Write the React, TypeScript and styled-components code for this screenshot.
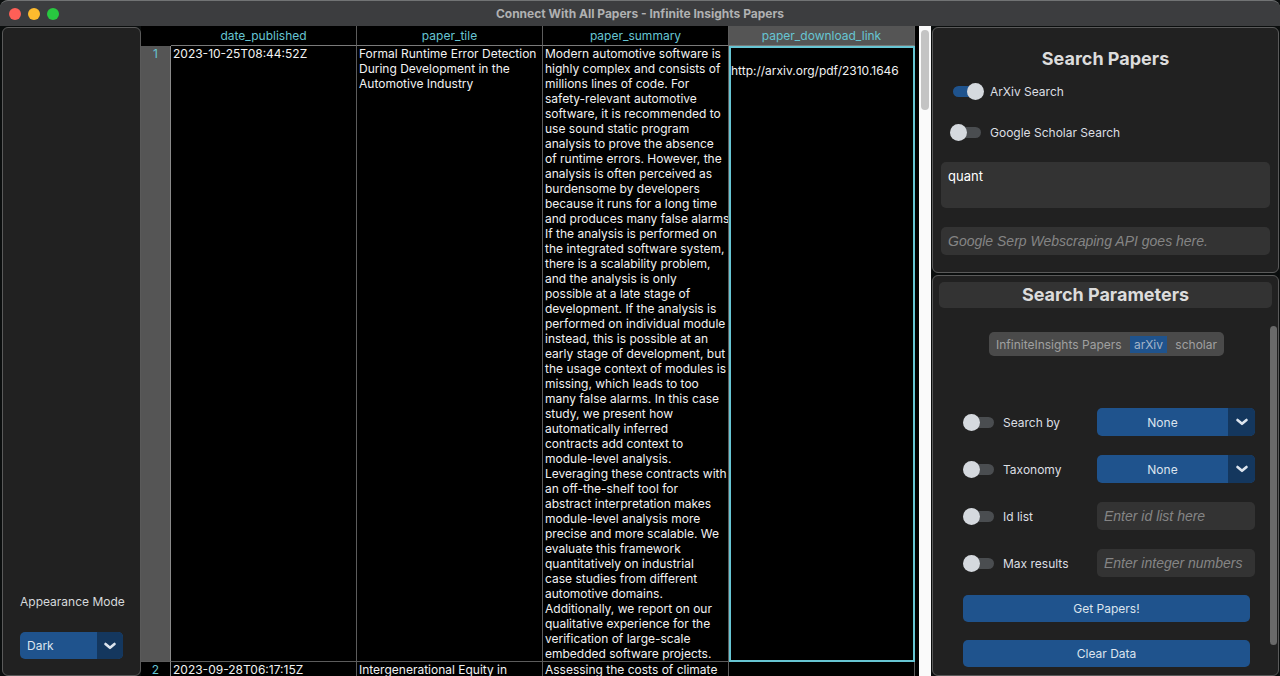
import React from "react";
import styled, { createGlobalStyle, css } from "styled-components";

const GlobalStyle = createGlobalStyle`
  *, *::before, *::after { box-sizing: border-box; }
  body {
    margin: 0;
    background: #0b0e0e;
    color: #dce4ee;
    font-family: Inter, "Liberation Sans", sans-serif;
    font-size: 12px;
  }
  button, input, select, textarea { font: inherit; color: inherit; }
`;

const Window = styled.div`
  display: flex;
  flex-direction: column;
  height: 100vh;
  overflow: hidden;
`;

const TitleBar = styled.header`
  display: grid;
  grid-template-columns: 1fr auto 1fr;
  align-items: center;
  height: 26px;
  flex: none;
  padding: 0 9px;
  background: #3c3d3f;
  border-top: 1px solid #717374;
  border-radius: 8px 8px 0 0;
`;

const Lights = styled.div`
  display: flex;
  gap: 7px;
`;

const Light = styled.button<{ $color: string }>`
  width: 12px;
  height: 12px;
  padding: 0;
  border: 0;
  border-radius: 50%;
  background: ${(p) => p.$color};
`;

const WindowTitle = styled.h1`
  margin: 0;
  font-size: 12px;
  font-weight: 700;
  line-height: 16px;
  color: #b0b1b2;
`;

const Body = styled.div`
  display: flex;
  flex: 1;
  min-height: 0;
  padding-left: 2px;
`;

const panel = css`
  background: #212121;
  border: 1px solid #5a5a5a;
  border-radius: 6px;
`;

const Sidebar = styled.aside`
  ${panel}
  display: flex;
  flex-direction: column;
  justify-content: flex-end;
  gap: 20px;
  flex: none;
  width: 139px;
  margin-top: 1px;
  padding: 16px 17px;
`;

const SidebarLabel = styled.label`
  line-height: 20px;
  text-align: center;
  white-space: nowrap;
  color: #d6d9dc;
`;

const TableArea = styled.main`
  flex: 1;
  min-width: 0;
  overflow: hidden;
  background: #000;
  padding-right: 4px;
`;

const PaperTable = styled.table`
  width: 100%;
  table-layout: fixed;
  border-collapse: separate;
  border-spacing: 0;
  color: #f2f2f2;
  line-height: 15px;
`;

const IndexCol = styled.col`
  width: 30px;
`;

const ColumnHead = styled.th<{ $selected?: boolean }>`
  height: 20px;
  padding: 0;
  font-weight: 400;
  color: #67c5d3;
  background: ${(p) => (p.$selected ? "#555" : "#000")};
  border-right: 1px solid #5c5c5c;
  border-bottom: 1px solid #7a7a7a;
`;

const Corner = styled.td`
  background: #000;
`;

const RowHead = styled.th<{ $selected?: boolean }>`
  padding: 0;
  vertical-align: top;
  font-weight: 400;
  color: #67c5d3;
  background: ${(p) => (p.$selected ? "#555" : "#000")};
  border-right: 1px solid #8a8a8a;
  border-bottom: 1px solid #5c5c5c;
`;

const Cell = styled.td<{ $selected?: boolean }>`
  padding: 0 0 0 2px;
  vertical-align: top;
  white-space: pre;
  overflow: hidden;
  border-right: 1px solid #5c5c5c;
  border-bottom: 1px solid #5c5c5c;
  ${(p) =>
    p.$selected &&
    css`
      padding: 0;
      border: 2px solid #67c5d3;
    `}
`;

const PaperLink = styled.a`
  color: inherit;
  text-decoration: none;
`;

const TableScrollbar = styled.div`
  flex: none;
  width: 12px;
  padding: 4px 2px;
  background: #fafafa;
`;

const TableThumb = styled.div`
  height: 80px;
  border-radius: 4px;
  background: #c4c4c4;
`;

const Right = styled.aside`
  display: flex;
  flex-direction: column;
  gap: 2px;
  flex: none;
  width: 349px;
  padding: 1px 1px 0 1px;
`;

const SearchPanel = styled.section`
  ${panel}
  display: flex;
  flex-direction: column;
  height: 246px;
  flex: none;
  padding: 18px 8px 0;
`;

const PanelTitle = styled.h2`
  margin: 0;
  font-size: 18px;
  font-weight: 700;
  line-height: 26px;
  text-align: center;
  color: #dcdcdc;
`;

const Engines = styled.div`
  display: flex;
  flex-direction: column;
  gap: 21px;
  padding: 9px 0 20px 9px;
`;

const SwitchLabel = styled.label`
  display: flex;
  align-items: center;
  gap: 6px;
  height: 20px;
  white-space: nowrap;
  color: #dcdfe3;
`;

const Switch = styled.input.attrs({ type: "checkbox" })`
  appearance: none;
  display: grid;
  align-items: center;
  width: 34px;
  height: 17px;
  margin: 0;

  &::before,
  &::after {
    content: "";
    grid-area: 1 / 1;
  }
  &::before {
    height: 11px;
    margin: 0 3px;
    border-radius: 6px;
    background: #4a4d50;
  }
  &::after {
    width: 17px;
    height: 17px;
    border-radius: 50%;
    background: #d5d9de;
  }
  &:checked::before {
    background: #1f538d;
  }
  &:checked::after {
    justify-self: end;
  }
`;

const QueryBox = styled.textarea`
  display: block;
  width: 100%;
  height: 46px;
  margin-bottom: 19px;
  padding: 6px 7px;
  border: 0;
  border-radius: 5px;
  resize: none;
  outline: 0;
  background: #333;
  color: #fff;
  font-size: 13px;
  line-height: 17px;
`;

const TextField = styled.input`
  width: 100%;
  height: 28px;
  padding: 0 7px;
  border: 0;
  border-radius: 5px;
  background: #333;

  &::placeholder {
    color: #858585;
    opacity: 1;
    font-family: "Liberation Sans", sans-serif;
    font-size: 14px;
    font-style: italic;
  }
`;

const ParamsPanel = styled.section`
  ${panel}
  display: flex;
  flex-direction: column;
  flex: 1;
  min-height: 0;
  padding: 6px 1px 0;
`;

const ParamsTitle = styled(PanelTitle)`
  margin: 0 5px;
  border-radius: 5px;
  background: #333;
`;

const ParamsScroll = styled.div`
  display: flex;
  flex: 1;
  min-height: 0;
  padding-top: 18px;
`;

const ParamsForm = styled.form`
  flex: 1;
  min-width: 0;
  padding: 6px 20px 0 29px;
`;

const ParamsThumb = styled.div`
  flex: none;
  width: 7px;
  height: 319px;
  border-radius: 4px;
  background: #6a6a6a;
`;

const Segments = styled.div`
  display: flex;
  justify-content: space-between;
  align-items: center;
  width: 235px;
  height: 24px;
  margin: 0 auto 52px;
  padding: 0 3px;
  border-radius: 5px;
  background: #4a4a4a;
`;

const Segment = styled.button<{ $active?: boolean }>`
  height: 17px;
  padding: 0 4px;
  border: 0;
  line-height: 17px;
  white-space: nowrap;
  color: ${(p) => (p.$active ? "#a3b4c8" : "#a0a0a0")};
  background: ${(p) => (p.$active ? "#1f538d" : "transparent")};
`;

const Fields = styled.div`
  display: grid;
  grid-template-columns: 1fr 158px;
  align-items: center;
  row-gap: 19px;
  margin-right: -5px;
`;

const SelectBox = styled.div<{ $arrow: number }>`
  display: grid;
  grid-template-columns: 1fr ${(p) => p.$arrow}px;
  align-items: center;
  height: ${(p) => p.$arrow + 1}px;
  overflow: hidden;
  border-radius: 5px;
  background: #1f538d;
`;

const Select = styled.select<{ $centered?: boolean }>`
  appearance: none;
  grid-area: 1 / 1;
  width: 100%;
  height: 100%;
  padding: 0 7px;
  border: 0;
  background: transparent;
  text-align-last: ${(p) => (p.$centered ? "center" : "left")};
`;

const Arrow = styled.span`
  display: grid;
  place-items: center;
  align-self: stretch;
  background: #14375e;
`;

const Action = styled.button`
  display: block;
  width: 100%;
  height: 27px;
  margin-top: 18px;
  border: 0;
  border-radius: 5px;
  background: #1f538d;
`;

const Chevron = () => (
  <svg width="14" height="10" viewBox="0 0 14 10" aria-hidden="true">
    <path
      d="M2.5 3 L7 6.8 L11.5 3"
      fill="none"
      stroke="#dce4ee"
      strokeWidth="2.6"
      strokeLinecap="round"
      strokeLinejoin="round"
    />
  </svg>
);

const columns = ["date_published", "paper_tile", "paper_summary", "paper_download_link"];

const papers = [
  {
    date: "2023-10-25T08:44:52Z",
    title: "Formal Runtime Error Detection\nDuring Development in the\nAutomotive Industry",
    link: "http://arxiv.org/pdf/2310.1646",
    summary: `Modern automotive software is
highly complex and consists of
millions lines of code. For
safety-relevant automotive
software, it is recommended to
use sound static program
analysis to prove the absence
of runtime errors. However, the
analysis is often perceived as
burdensome by developers
because it runs for a long time
and produces many false alarms
If the analysis is performed on
the integrated software system,
there is a scalability problem,
and the analysis is only
possible at a late stage of
development. If the analysis is
performed on individual module
instead, this is possible at an
early stage of development, but
the usage context of modules is
missing, which leads to too
many false alarms. In this case
study, we present how
automatically inferred
contracts add context to
module-level analysis.
Leveraging these contracts with
an off-the-shelf tool for
abstract interpretation makes
module-level analysis more
precise and more scalable. We
evaluate this framework
quantitatively on industrial
case studies from different
automotive domains.
Additionally, we report on our
qualitative experience for the
verification of large-scale
embedded software projects.`,
  },
  {
    date: "2023-09-28T06:17:15Z",
    title: "Intergenerational Equity in",
    link: "",
    summary: "Assessing the costs of climate",
  },
];

const engines = [
  { name: "ArXiv Search", on: true },
  { name: "Google Scholar Search", on: false },
];

const params = [
  { name: "Search by", options: ["None"] },
  { name: "Taxonomy", options: ["None"] },
  { name: "Id list", placeholder: "Enter id list here" },
  { name: "Max results", placeholder: "Enter integer numbers" },
];

export default function App() {
  return (
    <Window>
      <GlobalStyle />
      <TitleBar>
        <Lights>
          <Light type="button" $color="#fe5f57" aria-label="Close" />
          <Light type="button" $color="#febb2e" aria-label="Minimize" />
          <Light type="button" $color="#28c840" aria-label="Zoom" />
        </Lights>
        <WindowTitle>Connect With All Papers - Infinite Insights Papers</WindowTitle>
      </TitleBar>
      <Body>
        <Sidebar>
          <SidebarLabel htmlFor="appearance">Appearance Mode</SidebarLabel>
          <SelectBox $arrow={26}>
            <Select id="appearance" defaultValue="Dark">
              <option>Dark</option>
            </Select>
            <Arrow>
              <Chevron />
            </Arrow>
          </SelectBox>
        </Sidebar>
        <TableArea>
          <PaperTable>
            <colgroup>
              <IndexCol />
              {columns.map((c) => (
                <col key={c} />
              ))}
            </colgroup>
            <thead>
              <tr>
                <Corner />
                {columns.map((c, i) => (
                  <ColumnHead key={c} scope="col" $selected={i === 3}>
                    {c}
                  </ColumnHead>
                ))}
              </tr>
            </thead>
            <tbody>
              {papers.map((p, i) => (
                <tr key={p.date}>
                  <RowHead scope="row" $selected={i === 0}>
                    {i + 1}
                  </RowHead>
                  <Cell>{p.date}</Cell>
                  <Cell>{p.title}</Cell>
                  <Cell>{p.summary}</Cell>
                  <Cell $selected={i === 0}>
                    {p.link && (
                      <>
                        {"\n"}
                        <PaperLink href={p.link}>{p.link}</PaperLink>
                      </>
                    )}
                  </Cell>
                </tr>
              ))}
            </tbody>
          </PaperTable>
        </TableArea>
        <TableScrollbar>
          <TableThumb />
        </TableScrollbar>
        <Right>
          <SearchPanel>
            <PanelTitle>Search Papers</PanelTitle>
            <Engines>
              {engines.map((e) => (
                <SwitchLabel key={e.name}>
                  <Switch defaultChecked={e.on} />
                  {e.name}
                </SwitchLabel>
              ))}
            </Engines>
            <QueryBox aria-label="Search query" defaultValue="quant" spellCheck={false} />
            <TextField aria-label="API key" placeholder="Google Serp Webscraping API goes here." />
          </SearchPanel>
          <ParamsPanel>
            <ParamsTitle>Search Parameters</ParamsTitle>
            <ParamsScroll>
              <ParamsForm>
                <Segments>
                  <Segment type="button">InfiniteInsights Papers</Segment>
                  <Segment type="button" $active>
                    arXiv
                  </Segment>
                  <Segment type="button">scholar</Segment>
                </Segments>
                <Fields>
                  {params.map((f) => (
                    <React.Fragment key={f.name}>
                      <SwitchLabel>
                        <Switch />
                        {f.name}
                      </SwitchLabel>
                      {f.options ? (
                        <SelectBox $arrow={27}>
                          <Select $centered aria-label={f.name} defaultValue="None">
                            {f.options.map((o) => (
                              <option key={o}>{o}</option>
                            ))}
                          </Select>
                          <Arrow>
                            <Chevron />
                          </Arrow>
                        </SelectBox>
                      ) : (
                        <TextField aria-label={f.name} placeholder={f.placeholder} />
                      )}
                    </React.Fragment>
                  ))}
                </Fields>
                <Action type="button">Get Papers!</Action>
                <Action type="button">Clear Data</Action>
              </ParamsForm>
              <ParamsThumb />
            </ParamsScroll>
          </ParamsPanel>
        </Right>
      </Body>
    </Window>
  );
}
